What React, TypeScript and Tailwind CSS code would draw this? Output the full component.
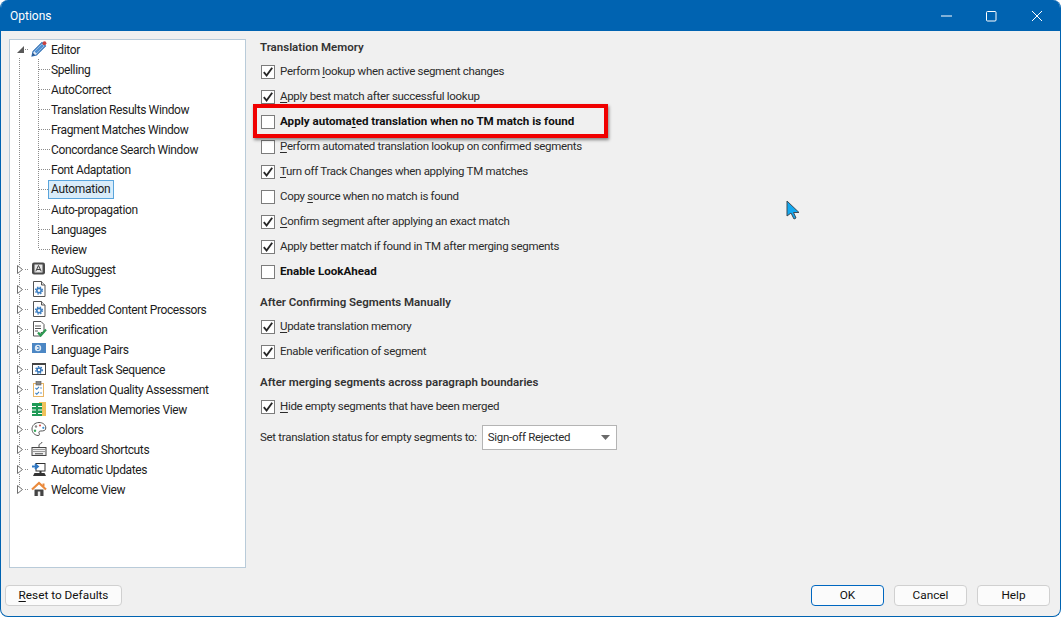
import React from "react";

const font = "[font-family:Roboto,'Noto_Sans',sans-serif]";

function Gear({ x, y, r, c = "#3f7fc1" }: { x: number; y: number; r: number; c?: string }) {
  return (
    <g>
      <circle cx={x} cy={y} r={r} fill="none" stroke={c} strokeWidth={r * 0.75} />
      <circle cx={x} cy={y} r={r + 1.3} fill="none" stroke={c} strokeWidth="1.3" strokeDasharray="1.4 1.4" />
    </g>
  );
}

const Svg = ({ children }: { children: React.ReactNode }) => (
  <svg width="16" height="16" viewBox="0 0 16 16" className="shrink-0">
    {children}
  </svg>
);

const icons: Record<string, React.ReactNode> = {
  pencil: (
    <Svg>
      <path d="M1 15l1-4.500L11 1.500 14.500 5l-9 9z" fill="#dfe9f5" stroke="#2f6fb5" strokeWidth="1.100" />
      <path d="M3.500 10.500L11 3l2 2-7.500 7.500z" fill="#4d8fd3" />
      <path d="M1 15l1-3 2 2z" fill="#244f85" />
      <circle cx="13.500" cy="2.200" r="1.900" fill="#c8413f" />
    </Svg>
  ),
  suggest: (
    <Svg>
      <rect x="1" y="1.500" width="13" height="12" rx="2" fill="#4a4a4a" />
      <rect x="3.500" y="3.500" width="8" height="8" fill="#e6e6e6" />
      <path d="M4.800 10.300L7.500 4.500l2.700 5.800M6 8.500h3" fill="none" stroke="#444" strokeWidth="1" />
    </Svg>
  ),
  file: (
    <Svg>
      <path d="M2.500 .5h8l3.500 3.500v11.500h-11.500z" fill="#fff" stroke="#555" />
      <path d="M10.500 .5v3.500h3.500" fill="#ddd" stroke="#555" />
      <Gear x={8} y={9.500} r={2.200} />
    </Svg>
  ),
  verify: (
    <Svg>
      <path d="M2.500 .5h7.500l3 3v8h-3v3.500h-7.500z" fill="#fff" stroke="#555" />
      <path d="M4 5h6M4 7.500h6M4 10h3" stroke="#555" />
      <path d="M7 11.500l2.700 3L15 8.500" fill="none" stroke="#2d9a52" strokeWidth="2.200" />
    </Svg>
  ),
  pairs: (
    <Svg>
      <rect x="1" y="2" width="14" height="10" fill="#4c87c4" />
      <circle cx="7" cy="7" r="3.200" fill="#dbe8f4" />
      <path d="M6 5.500h2v3H6" fill="none" stroke="#4c87c4" />
    </Svg>
  ),
  task: (
    <Svg>
      <rect x="1.500" y="2.500" width="13" height="11" fill="#fff" stroke="#444" />
      <rect x="1" y="2" width="14" height="2" fill="#444" />
      <Gear x={8} y={9} r={2} c="#2f72b8" />
    </Svg>
  ),
  quality: (
    <Svg>
      <rect x="2.500" y="2.500" width="10" height="13" fill="#fff" stroke="#e8b565" />
      <rect x="5" y=".5" width="5" height="3.500" fill="#888" stroke="#555" strokeWidth=".6" />
      <path d="M4.500 7l1.300 1.300L8 5.800M4.500 12l1.300 1.300L8 10.800" fill="none" stroke="#3a7fc0" strokeWidth="1.100" />
      <path d="M9 7h2M9 12h2" stroke="#6a9ccc" />
    </Svg>
  ),
  tm: (
    <Svg>
      <rect x="8" y="1" width="7" height="14" fill="#f0c25c" />
      <rect x="1" y="2" width="10" height="13" fill="#1f9a56" />
      <path d="M1 5.500h4M1 9h4M1 12.500h4M7 5.500h4M7 9h4M7 12.500h4" stroke="#fff" strokeWidth="1.100" />
    </Svg>
  ),
  colors: (
    <Svg>
      <path d="M8 1.500C4 1.500 1 4.500 1 8s3 6.500 6 6.500c2 0 1.500-1.500 1-2.500-.5-1.200.5-2 1.800-2 2.500 0 5-.2 5-3 0-3.500-3.300-5.500-6.800-5.500z" fill="#fff" stroke="#555" />
      <circle cx="5" cy="5.500" r="1.200" fill="#8a8a8a" />
      <circle cx="9" cy="4.500" r="1.100" fill="#d9534f" />
      <circle cx="12.300" cy="6.800" r="1.100" fill="#3d8fd0" />
      <circle cx="4" cy="9.700" r="1.200" fill="#39a85c" />
    </Svg>
  ),
  keyboard: (
    <Svg>
      <path d="M8 6V4c0-1.500 3-1 3-3" fill="none" stroke="#555" />
      <rect x="1" y="6.500" width="14" height="8" fill="#eee" stroke="#444" />
      <path d="M2.500 8.500h11M2.500 10.500h11" stroke="#444" strokeDasharray="1 1" />
      <path d="M4 12.800h8" stroke="#444" />
    </Svg>
  ),
  update: (
    <Svg>
      <rect x="5" y="2.500" width="9" height="7.500" fill="#fff" stroke="#333" />
      <path d="M1 5.500h5M4 3l3 2.500L4 8" fill="none" stroke="#2f78c4" strokeWidth="1.800" />
      <rect x="8.500" y="10" width="2" height="2" fill="#333" />
      <path d="M2 15l1.500-3h10l1.500 3z" fill="#333" />
    </Svg>
  ),
  home: (
    <Svg>
      <path d="M3.500 8.500h9V15h-9z" fill="#444" />
      <rect x="6.800" y="10.500" width="2.500" height="4.500" fill="#eee" />
      <path d="M1 8.500l7-6.500 7 6.500" fill="none" stroke="#ea8a3c" strokeWidth="2.200" />
      <rect x="11.500" y="2.500" width="2" height="3" fill="#ea8a3c" />
    </Svg>
  ),
};

const children = [
  "Spelling",
  "AutoCorrect",
  "Translation Results Window",
  "Fragment Matches Window",
  "Concordance Search Window",
  "Font Adaptation",
  "Automation",
  "Auto-propagation",
  "Languages",
  "Review",
];

const parents: [string, string][] = [
  ["AutoSuggest", "suggest"],
  ["File Types", "file"],
  ["Embedded Content Processors", "file"],
  ["Verification", "verify"],
  ["Language Pairs", "pairs"],
  ["Default Task Sequence", "task"],
  ["Translation Quality Assessment", "quality"],
  ["Translation Memories View", "tm"],
  ["Colors", "colors"],
  ["Keyboard Shortcuts", "keyboard"],
  ["Automatic Updates", "update"],
  ["Welcome View", "home"],
];

function TreeLines() {
  return (
    <svg className="absolute left-0 top-0 pointer-events-none" width="60" height="470" shapeRendering="crispEdges">
      <path d="M9.500 18V448" stroke="#8c8c8c" strokeDasharray="1 1" fill="none" />
      <path d="M28.500 19V209" stroke="#8c8c8c" strokeDasharray="1 1" fill="none" />
      <path
        d="M29 29h11M29 49h11M29 69h11M29 89h11M29 109h11M29 129h11M29 149h11M29 169h11M29 189h11M29 209h11"
        stroke="#8c8c8c"
        strokeDasharray="1 1"
        fill="none"
      />
      <path
        d="M15 9h4M15 229h4M15 249h4M15 269h4M15 289h4M15 309h4M15 329h4M15 349h4M15 369h4M15 389h4M15 409h4M15 429h4M15 449h4"
        stroke="#8c8c8c"
        strokeDasharray="1 1"
        fill="none"
      />
    </svg>
  );
}

function Expander({ open }: { open?: boolean }) {
  return (
    <span className="relative flex h-[20px] w-[12px] items-center justify-center">
      {open ? (
        <svg width="7" height="7" viewBox="0 0 7 7">
          <path d="M7 0v7H0z" fill="#595959" />
        </svg>
      ) : (
        <svg width="6" height="9" viewBox="0 0 6 9" className="bg-white">
          <path d="M.5.500l5 4-5 4z" fill="#fff" stroke="#6e6e6e" />
        </svg>
      )}
    </span>
  );
}

function Tree() {
  return (
    <div className="relative h-[529px] w-[237px] shrink-0 border border-[#b9cbd9] bg-white text-[12px] tracking-[-0.38px] text-[#1c1c1c]">
      <TreeLines />
      <div className="relative -mt-px flex h-[20px] items-center pl-[4px]">
        <Expander open />
        <span className="ml-[5px] w-[20px]">{icons.pencil}</span>
        <span className="pt-px">Editor</span>
      </div>
      {children.map((c) => (
        <div key={c} className="relative flex h-[20px] items-center pl-[41px]">
          {c === "Automation" ? (
            <span className="-ml-[3px] mt-px h-[19px] border border-[#5aa5dc] bg-[#d9ecfa] pl-[2px] pr-[3px] leading-[17px] tracking-[-0.3px]">{c}</span>
          ) : (
            <span className="pt-px">{c}</span>
          )}
        </div>
      ))}
      {parents.map(([label, icon]) => (
        <div key={label} className="relative flex h-[20px] items-center pl-[4px]">
          <Expander />
          <span className="ml-[5px] w-[20px]">{icons[icon]}</span>
          <span className="pt-px">{label}</span>
        </div>
      ))}
    </div>
  );
}

function Check({ checked, label, u, bold }: { checked?: boolean; label: string; u?: number; bold?: boolean }) {
  return (
    <div className="flex h-[25px] items-center gap-[5px]">
      <span className="flex size-[14px] shrink-0 items-center justify-center border border-[#7c7c7c] bg-white">
        {checked && (
          <svg width="12" height="12" viewBox="0 0 12 12">
            <path d="M1.800 6.200L4.600 9.500 10.200 1.800" fill="none" stroke="#262626" strokeWidth="1.900" />
          </svg>
        )}
      </span>
      <span className={bold ? "text-[11.6px] font-bold tracking-normal text-[#111]" : "tracking-[-0.3px]"}>
        {u === undefined ? (
          label
        ) : (
          <>
            {label.slice(0, u)}
            <span className="underline underline-offset-2">{label[u]}</span>
            {label.slice(u + 1)}
          </>
        )}
      </span>
    </div>
  );
}

const Heading = ({ children }: { children: React.ReactNode }) => (
  <div className="flex h-[20px] items-center font-semibold text-[#333]">{children}</div>
);

function Btn({ children, primary, w }: { children: React.ReactNode; primary?: boolean; w: string }) {
  return (
    <button
      className={`${w} h-[21px] rounded-[4px] border bg-[#fbfbfb] pt-px text-[11.8px] leading-none text-[#111] ${
        primary ? "border-[#0067c0]" : "border-[#d0d0d0]"
      }`}
    >
      {children}
    </button>
  );
}

export default function App() {
  return (
    <div className={`${font} flex h-[617px] w-[1061px] flex-col overflow-hidden rounded-[8px] border border-t-0 border-[#0063b1] bg-[#f0f0f0] text-[11.5px] text-[#2b2b2b]`}>
      <div className="-mx-[1px] flex h-[31px] shrink-0 items-center justify-between bg-[#0063b1] pl-[10px] pr-[7px] text-[12px] text-white">
        <span>Options</span>
        <svg width="128" height="16" viewBox="0 0 128 16">
          <path d="M15 8h11" stroke="#fff" strokeWidth="1" />
          <rect x="60.500" y="3.500" width="9.500" height="9.500" rx="1" fill="none" stroke="#fff" />
          <path d="M106 3l10 10M116 3l-10 10" stroke="#fff" />
        </svg>
      </div>
      <div className="flex min-h-0 flex-1 flex-col">
        <div className="flex flex-1 pl-[8px] pt-[8px]">
          <Tree />
          <div className="relative -mt-px ml-[14px] flex-1">
            <div className="relative flex flex-col">
              <Heading>Translation Memory</Heading>
              <div className="ml-px mt-px flex flex-col">
                <Check checked label="Perform lookup when active segment changes" u={8} />
                <Check checked label="Apply best match after successful lookup" u={0} />
                <Check bold label="Apply automated translation when no TM match is found" u={12} />
                <Check label="Perform automated translation lookup on confirmed segments" u={0} />
                <Check checked label="Turn off Track Changes when applying TM matches" u={0} />
                <Check label="Copy source when no match is found" u={5} />
                <Check checked label="Confirm segment after applying an exact match" u={0} />
                <Check checked label="Apply better match if found in TM after merging segments" />
                <Check bold label="Enable LookAhead" />
              </div>
              <div className="mt-[9px]">
                <Heading>After Confirming Segments Manually</Heading>
              </div>
              <div className="ml-px mt-px flex flex-col">
                <Check checked label="Update translation memory" u={0} />
                <Check checked label="Enable verification of segment" />
              </div>
              <div className="mt-[9px]">
                <Heading>After merging segments across paragraph boundaries</Heading>
              </div>
              <div className="ml-px mt-px flex flex-col">
                <Check checked label="Hide empty segments that have been merged" u={0} />
              </div>
              <div className="mt-[6px] flex items-center gap-[5px] tracking-[-0.3px]">
                <span>Set translation status for empty segments to:</span>
                <div className="flex h-[25px] w-[135px] items-center justify-between border border-[#b4b4b4] bg-white pl-[5px] pr-[6px]">
                  <span>Sign-off Rejected</span>
                  <svg width="9" height="5" viewBox="0 0 9 5">
                    <path d="M0 0h9L4.500 5z" fill="#6a6a6a" />
                  </svg>
                </div>
              </div>
              <div className="absolute left-[-7px] top-[66px] h-[34px] w-[355px] border-[4px] border-[#f00000] shadow-[1px_2px_3px_rgba(0,0,0,0.45)]" />
            </div>
            <svg className="absolute left-[526px] top-[162px]" width="15" height="21" viewBox="0 0 15 21">
              <path d="M1 1v15l4-3 3 6 2-1-2.500-5.500H13z" fill="#12a8f0" stroke="#3d4a55" strokeWidth="1" />
            </svg>
          </div>
        </div>
        <div className="flex items-center justify-between pb-[10px] pl-[4px] pr-[10px]">
          <Btn w="w-[117px]">
            <span className="underline underline-offset-2">R</span>eset to Defaults
          </Btn>
          <div className="flex gap-[10px]">
            <Btn primary w="w-[73px]">OK</Btn>
            <Btn w="w-[73px]">Cancel</Btn>
            <Btn w="w-[73px]">Help</Btn>
          </div>
        </div>
      </div>
    </div>
  );
}
